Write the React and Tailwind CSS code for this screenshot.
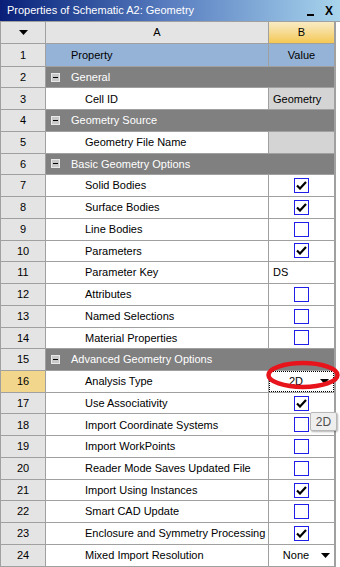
import React from 'react';

const rows = [
  { type: 'cat', label: 'General' },
  { label: 'Cell ID', value: 'Geometry', gray: true },
  { type: 'cat', label: 'Geometry Source' },
  { label: 'Geometry File Name', value: '', gray: true },
  { type: 'cat', label: 'Basic Geometry Options' },
  { label: 'Solid Bodies', check: true },
  { label: 'Surface Bodies', check: true },
  { label: 'Line Bodies', check: false },
  { label: 'Parameters', check: true },
  { label: 'Parameter Key', value: 'DS' },
  { label: 'Attributes', check: false },
  { label: 'Named Selections', check: false },
  { label: 'Material Properties', check: false },
  { type: 'cat', label: 'Advanced Geometry Options' },
  { label: 'Analysis Type', drop: '2D', active: true },
  { label: 'Use Associativity', check: true },
  { label: 'Import Coordinate Systems', check: false },
  { label: 'Import WorkPoints', check: false },
  { label: 'Reader Mode Saves Updated File', check: false },
  { label: 'Import Using Instances', check: true },
  { label: 'Smart CAD Update', check: false },
  { label: 'Enclosure and Symmetry Processing', check: true },
  { label: 'Mixed Import Resolution', drop: 'None' },
];

const DownArrow = () => (
  <svg width="9" height="5" viewBox="0 0 9 5">
    <path d="M0 0h9L4.5 5z" fill="#000" />
  </svg>
);

const CheckBox = ({ checked }) => (
  <div className="w-[15px] h-[15px] border border-[#1f1fe8] bg-white flex items-center justify-center">
    {checked && (
      <svg width="11" height="9" viewBox="0 0 11 9">
        <path d="M1 4.5l3 3L10 1" stroke="#000" strokeWidth="2.2" fill="none" />
      </svg>
    )}
  </div>
);

export default function App() {
  return (
    <div
      className="relative w-[340px] h-[567px] overflow-hidden bg-white text-[11px] text-black"
      style={{ fontFamily: '"Liberation Sans", Arial, sans-serif' }}
    >
      {/* title bar */}
      <div className="h-[21px] flex items-center pl-[7px] pr-[7px] bg-gradient-to-r from-[#0a1e78] via-[#5a7ec0] to-[#a8d4ec] text-white text-[11px]">
        <span className="flex-1 leading-none">Properties of Schematic A2: Geometry</span>
        <div className="w-[7px] h-[2px] bg-black mt-[8px] mr-[11px]" />
        <span className="font-bold text-black text-[12px] leading-none">X</span>
      </div>

      <div className="border-l border-[#a0a0a0]">
        {/* header */}
        <div className="flex h-[23.3px] border-t border-[#a0a0a0]">
          <div className="w-[45px] shrink-0 flex items-center justify-center bg-[#e4e4e4] border-r border-b border-[#a0a0a0]">
            <DownArrow />
          </div>
          <div className="w-[223px] shrink-0 flex items-center justify-center bg-[#e4e4e4] border-r border-b border-[#a0a0a0]">
            A
          </div>
          <div className="w-[67px] shrink-0 flex items-center justify-center bg-gradient-to-b from-[#f8ecc4] to-[#f4c850] border-r-2 border-b border-[#a0a0a0]">
            B
          </div>
        </div>

        {/* row 1 */}
        <div className="flex h-[22.4px]">
          <div className="w-[45px] shrink-0 flex items-center justify-center bg-[#e4e4e4] border-r border-b border-[#a0a0a0]">
            1
          </div>
          <div className="w-[223px] shrink-0 flex items-center pl-[25px] bg-[#95b3d7] border-r border-b border-[#a0a0a0]">
            Property
          </div>
          <div className="w-[67px] shrink-0 flex items-center justify-center bg-[#95b3d7] border-r-2 border-b border-[#a0a0a0]">
            Value
          </div>
        </div>

        {rows.map((r, i) => {
          const n = i + 2;
          if (r.type === 'cat') {
            return (
              <div key={n} className="flex h-[21.74px]">
                <div className="w-[45px] shrink-0 flex items-center justify-center bg-[#e4e4e4] border-r border-b border-[#a0a0a0]">
                  {n}
                </div>
                <div className="w-[290px] shrink-0 flex items-center bg-[#808080] text-white border-r-2 border-b border-[#a0a0a0]">
                  <div className="ml-[5px] w-[9px] h-[9px] border border-[#e8e8e8] bg-[#c8c8c8] flex items-center justify-center">
                    <div className="w-[5px] h-[1px] bg-black" />
                  </div>
                  <span className="ml-[11px]">{r.label}</span>
                </div>
              </div>
            );
          }
          return (
            <div key={n} className="flex h-[21.74px]">
              <div
                className={`w-[45px] shrink-0 flex items-center justify-center border-r border-b border-[#a0a0a0] ${
                  r.active ? 'bg-[#f2d68c]' : 'bg-[#e4e4e4]'
                }`}
              >
                {n}
              </div>
              <div className="w-[223px] shrink-0 flex items-center pl-[39px] bg-white border-r border-b border-[#a0a0a0] whitespace-nowrap">
                {r.label}
              </div>
              <div
                className={`w-[67px] shrink-0 flex items-center border-r-2 border-b border-[#a0a0a0] ${
                  r.gray ? 'bg-[#d4d4d4]' : 'bg-white'
                } ${r.check !== undefined ? 'justify-center' : ''}`}
              >
                {r.check !== undefined && <CheckBox checked={r.check} />}
                {r.value !== undefined && <span className="pl-[4px]">{r.value}</span>}
                {r.drop && (
                  <div
                    className={`flex-1 h-full flex items-center ${
                      r.active ? 'border border-dotted border-black' : ''
                    }`}
                  >
                    <span className="flex-1 text-center pl-[2px]">{r.drop}</span>
                    <span className="pr-[4px] flex items-center">
                      <DownArrow />
                    </span>
                  </div>
                )}
              </div>
            </div>
          );
        })}
      </div>

      {/* red annotation ellipse */}
      <svg className="absolute left-[265px] top-[359px]" width="76" height="32" viewBox="0 0 76 32">
        <ellipse cx="38" cy="16" rx="34.5" ry="12" fill="none" stroke="#e8141c" strokeWidth="4.5" />
      </svg>

      {/* tooltip */}
      <div className="absolute left-[310px] top-[412px] w-[27px] h-[19px] flex items-center justify-center bg-[#eeeeee] border border-[#b8b8b8] rounded-[2px] shadow-[1px_1px_2px_rgba(0,0,0,0.3)] text-[#505050] text-[12px]">
        2D
      </div>
    </div>
  );
}
